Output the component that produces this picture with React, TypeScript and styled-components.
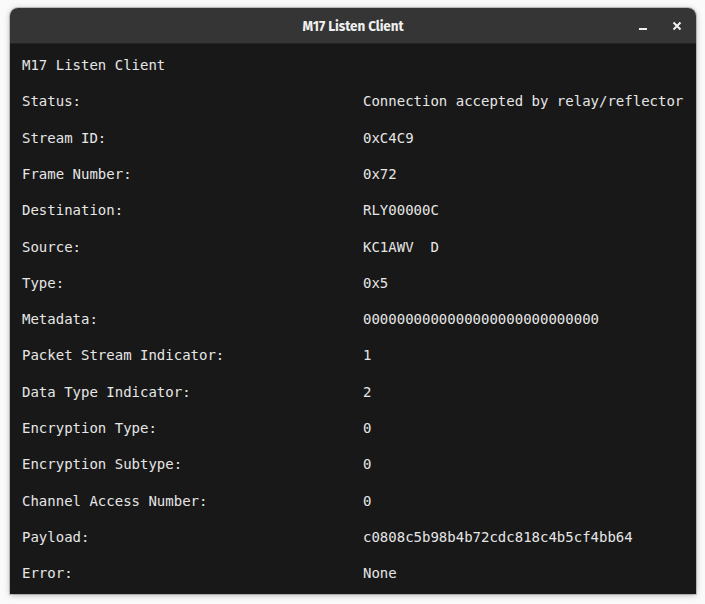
import React from "react";
import styled, { createGlobalStyle } from "styled-components";

const Global = createGlobalStyle`
  html, body { margin: 0; padding: 0; background: #fafafa; }
  body { width: 705px; height: 604px; overflow: hidden; }
`;

const Page = styled.div`
  width: 705px;
  height: 604px;
  padding: 8px 10px 10px 10px;
  box-sizing: border-box;
  background: #fafafa;
`;

const Window = styled.div`
  width: 686px;
  height: 586px;
  display: flex;
  flex-direction: column;
  border-radius: 8px 8px 0 0;
  overflow: hidden;
  box-shadow: 0 1px 6px rgba(0, 0, 0, 0.28), 0 0 0 1px rgba(0, 0, 0, 0.18);
`;

const TitleBar = styled.div`
  height: 36px;
  flex: none;
  background: #353535;
  border-bottom: 1px solid #232323;
  box-sizing: border-box;
  display: grid;
  grid-template-columns: 1fr auto 1fr;
  align-items: center;
`;

const Title = styled.div`
  grid-column: 2;
  padding-top: 2px;
  font-family: "Fira Sans", "Noto Sans", sans-serif;
  font-weight: 700;
  font-size: 13.5px;
  color: #f0f0f0;
  letter-spacing: -0.1px;
`;

const Controls = styled.div`
  grid-column: 3;
  justify-self: end;
  display: flex;
  align-items: center;
  gap: 10px;
  padding-right: 7px;
`;

const CtlButton = styled.div`
  width: 24px;
  height: 24px;
  display: flex;
  align-items: center;
  justify-content: center;
`;

const Body = styled.div`
  flex: 1;
  background: #181818;
  padding: 3px 12px;
  display: flex;
  flex-direction: column;
  font-family: "DejaVu Sans Mono", monospace;
  font-size: 14px;
  color: #e6e6e6;
`;

const Row = styled.div`
  height: 36.29px;
  display: grid;
  grid-template-columns: 341px 1fr;
  align-items: center;
  white-space: pre;
`;

const rows: [string, string][] = [
  ["Status:", "Connection accepted by relay/reflector"],
  ["Stream ID:", "0xC4C9"],
  ["Frame Number:", "0x72"],
  ["Destination:", "RLY00000C"],
  ["Source:", "KC1AWV  D"],
  ["Type:", "0x5"],
  ["Metadata:", "0000000000000000000000000000"],
  ["Packet Stream Indicator:", "1"],
  ["Data Type Indicator:", "2"],
  ["Encryption Type:", "0"],
  ["Encryption Subtype:", "0"],
  ["Channel Access Number:", "0"],
  ["Payload:", "c0808c5b98b4b72cdc818c4b5cf4bb64"],
  ["Error:", "None"],
];

export default function App() {
  return (
    <Page>
      <Global />
      <Window>
        <TitleBar>
          <Title>M17 Listen Client</Title>
          <Controls>
            <CtlButton>
              <svg width="10" height="10" viewBox="0 0 10 10">
                <rect x="1" y="7" width="8" height="2" fill="#f0f0f0" />
              </svg>
            </CtlButton>
            <CtlButton>
              <svg width="10" height="10" viewBox="0 0 10 10">
                <path d="M1.5 1.5 L8.5 8.5 M8.5 1.5 L1.5 8.5" stroke="#f0f0f0" strokeWidth="2" />
              </svg>
            </CtlButton>
          </Controls>
        </TitleBar>
        <Body>
          <Row>
            <span>M17 Listen Client</span>
            <span />
          </Row>
          {rows.map(([k, v]) => (
            <Row key={k}>
              <span>{k}</span>
              <span>{v}</span>
            </Row>
          ))}
        </Body>
      </Window>
    </Page>
  );
}
